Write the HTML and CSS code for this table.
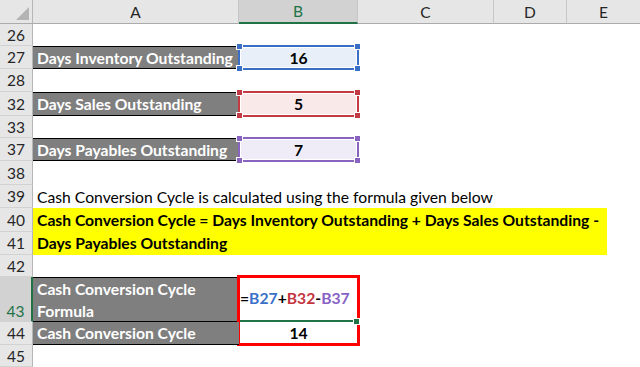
FILE: index.html
```html
<!DOCTYPE html>
<html>
<head>
<meta charset="utf-8">
<link rel="stylesheet" href="styles.css">
</head>
<body>
<div class="sheet">
  <div class="corner"><svg width="33" height="24" viewBox="0 0 33 24"><polygon points="29,7 29,20 16,20" fill="#b4b4b4"/></svg></div>
  <div class="ch">A</div>
  <div class="ch sel">B</div>
  <div class="ch">C</div>
  <div class="ch">D</div>
  <div class="ch last">E</div>

  <div class="rh">26</div><div></div><div></div><div></div><div></div><div></div>

  <div class="rh">27</div>
  <div class="lbl">Days Inventory Outstanding</div>
  <div class="cellb"><div class="ref blue"><span class="h tl"></span><span class="h tr"></span><span class="h bl"></span><span class="h br"></span>16</div></div>
  <div></div><div></div><div></div>

  <div class="rh">28</div><div></div><div></div><div></div><div></div><div></div>

  <div class="rh">32</div>
  <div class="lbl">Days Sales Outstanding</div>
  <div class="cellb"><div class="ref red"><span class="h tl"></span><span class="h tr"></span><span class="h bl"></span><span class="h br"></span>5</div></div>
  <div></div><div></div><div></div>

  <div class="rh">33</div><div></div><div></div><div></div><div></div><div></div>

  <div class="rh">37</div>
  <div class="lbl">Days Payables Outstanding</div>
  <div class="cellb"><div class="ref purple"><span class="h tl"></span><span class="h tr"></span><span class="h bl"></span><span class="h br"></span>7</div></div>
  <div></div><div></div><div></div>

  <div class="rh">38</div><div></div><div></div><div></div><div></div><div></div>

  <div class="rh">39</div>
  <div class="text">Cash Conversion Cycle is calculated using the formula given below</div>
  <div></div><div></div><div></div><div></div>

  <div class="rh">40</div>
  <div class="merge"><div class="yellow">Cash Conversion Cycle = Days Inventory Outstanding + Days Sales Outstanding -<br>Days Payables Outstanding</div></div>

  <div class="rh">41</div>

  <div class="rh">42</div><div></div><div></div><div></div><div></div><div></div>

  <div class="rh active">43</div>
  <div class="lbl tall">Cash Conversion Cycle<br>Formula</div>
  <div class="result">
    <div class="formula">=<span class="cb">B27</span>+<span class="cr">B32</span>-<span class="cp">B37</span><span class="fill"></span></div>
    <div class="value">14</div>
  </div>
  <div></div><div></div><div></div>

  <div class="rh">44</div>
  <div class="lbl last">Cash Conversion Cycle</div>
  <div></div><div></div><div></div>

  <div class="rh">45</div><div></div><div></div><div></div><div></div><div></div>
</div>
</body>
</html>
```

FILE: styles.css
```css
html, body {
  margin: 0;
  padding: 0;
  background: #ffffff;
}
body {
  font-family: Lato, "Liberation Sans", sans-serif;
  font-size: 15.7px;
  color: #000;
  overflow: hidden;
}
.sheet {
  display: grid;
  width: 640px;
  height: 367px;
  grid-template-columns: 33px 206px 119px 136px 73px 73px;
  grid-template-rows: 24px 22px 23px 23px 24px 22px 23px 24px 23px 24px 23px 22px 45px 23px 22px;
  overflow: hidden;
}
.corner {
  background: #e6e6e6;
  border-right: 1px solid #b6b6b6;
  border-bottom: 1px solid #ababab;
  box-sizing: border-box;
  overflow: hidden;
}
.corner svg { display: block; }
.ch {
  background: #e6e6e6;
  border-bottom: 1px solid #ababab;
  border-right: 1px solid #c6c6c6;
  box-sizing: border-box;
  display: flex;
  align-items: center;
  justify-content: center;
  color: #262626;
  font-size: 15.5px;
}
.ch.last { border-right: none; }
.ch.sel {
  background: #d2d2d2;
  border-bottom: 2px solid #217346;
  color: #217346;
}
.rh {
  background: #e6e6e6;
  border-right: 1px solid #b6b6b6;
  border-bottom: 1px solid #d2d2d2;
  box-sizing: border-box;
  display: flex;
  align-items: center;
  justify-content: center;
  color: #262626;
  font-size: 15.5px;
}
.rh.active {
  background: #d2d2d2;
  border-right: 2px solid #217346;
  color: #217346;
  align-items: flex-end;
  padding-bottom: 1px;
}
.lbl {
  background: #7f7f7f;
  color: #ffffff;
  font-weight: 700;
  border-top: 1px solid #000;
  border-bottom: 1px solid #000;
  box-sizing: border-box;
  padding-left: 4px;
  display: flex;
  align-items: center;
  white-space: nowrap;
  overflow: hidden;
}
.lbl.tall {
  line-height: 22px;
  align-items: center;
}
.lbl.last { border-top: none; }
.cellb {
  display: flex;
}
.ref {
  position: relative;
  flex: 1;
  margin: -1px;
  border: 2px solid;
  box-shadow: inset 0 0 0 1px #fff;
  display: flex;
  align-items: center;
  justify-content: center;
  font-weight: 700;
}
.ref.blue { border-color: #3a6fc6; background: #e9eff8; }
.ref.blue .h { background: #3a6fc6; }
.ref.red { border-color: #c23a44; background: #f9e9e9; }
.ref.red .h { background: #c23a44; }
.ref.purple { border-color: #8863c0; background: #f0ecf7; }
.ref.purple .h { background: #8863c0; }
.h {
  position: absolute;
  width: 5px;
  height: 5px;
  outline: 1px solid #fff;
}
.h.tl { left: -3px; top: -3px; }
.h.tr { right: -3px; top: -3px; }
.h.bl { left: -3px; bottom: -3px; }
.h.br { right: -3px; bottom: -3px; }
.text {
  padding-left: 4px;
  display: flex;
  align-items: center;
  white-space: nowrap;
}
.merge {
  grid-column: 2 / 7;
  grid-row: span 2;
}
.yellow {
  width: 574px;
  height: 100%;
  background: #ffff00;
  font-weight: 700;
  box-sizing: border-box;
  padding: 1px 0 0 4px;
  line-height: 23px;
  white-space: nowrap;
}
.result {
  grid-row: span 2;
  margin: -2px -2px -1px -2px;
  border: 3px solid #ff0000;
  display: grid;
  grid-template-rows: 44px 1fr;
}
.formula {
  position: relative;
  border-bottom: 2px solid #217346;
  font-weight: 700;
  display: flex;
  align-items: center;
  padding-left: 0;
  padding-bottom: 2px;
  margin-right: 1px;
}
.fill {
  position: absolute;
  right: -3px;
  bottom: -4px;
  width: 5px;
  height: 5px;
  background: #217346;
  outline: 1px solid #fff;
}
.cb { color: #3a70c8; }
.cr { color: #c4343f; }
.cp { color: #8762c4; }
.value {
  display: flex;
  align-items: center;
  justify-content: center;
  font-weight: 700;
}
```
